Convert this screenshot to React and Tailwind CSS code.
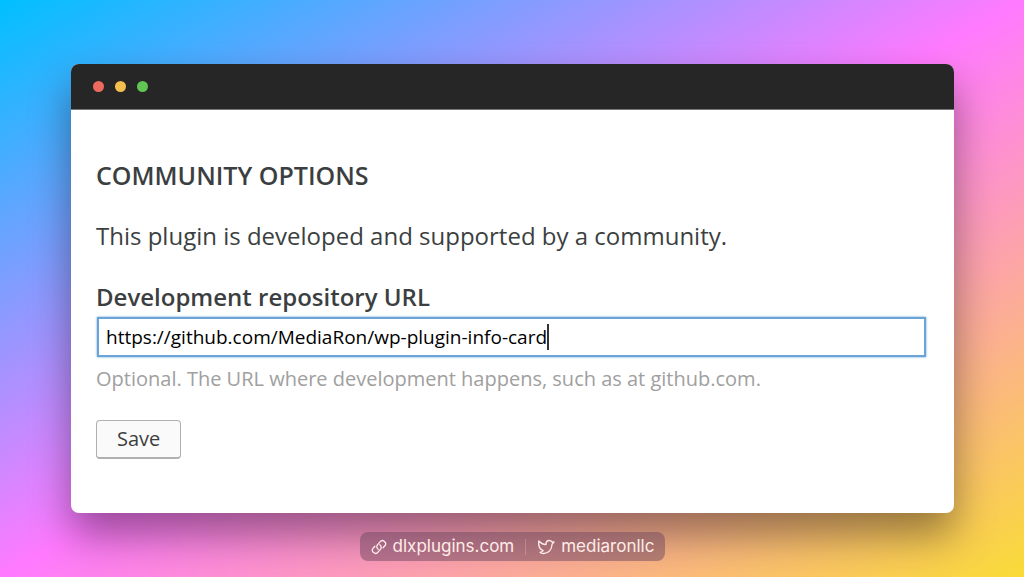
import { useState } from "react";

const DOTS = ["bg-[#ec6a5e]", "bg-[#f4bf4f]", "bg-[#61c554]"];

function LinkIcon() {
  return (
    <svg viewBox="0 0 16 16" className="size-4" fill="none" stroke="currentColor" strokeWidth="1.3" strokeLinecap="round" strokeLinejoin="round" aria-hidden="true">
      <path d="M7.200 10.200a3 3 0 0 1-.8-4.300l2.600-3a3.100 3.100 0 0 1 4.900 3.900l-1.800 2" />
      <path d="M8.800 5.800a3 3 0 0 1 .8 4.300l-2.600 3a3.100 3.100 0 0 1-4.900-3.900l1.800-2" />
    </svg>
  );
}

function BirdIcon() {
  return (
    <svg viewBox="0 0 18 16" className="h-4 w-[18px]" fill="none" stroke="currentColor" strokeWidth="1.3" strokeLinecap="round" strokeLinejoin="round" aria-hidden="true">
      <path d="M9 5.200c0-2.200 1.300-3.700 3.300-3.700 1.200 0 2.100.6 2.600 1.500h2.100l-1.900 2.200c-.3 5.300-3.600 9.300-8.500 9.300-1.900 0-3.300-.6-3.600-1.200 1.300-.1 2.500-.7 3.200-1.600C3 10.300 1.100 7 1.700 2c1.900 2.200 4.400 3.400 7.300 3.700z" />
    </svg>
  );
}

export default function App() {
  const [url, setUrl] = useState("https://github.com/MediaRon/wp-plugin-info-card");

  return (
    <div className="flex min-h-screen flex-col bg-linear-to-br/srgb from-[#00c0ff] via-[#ff7aff] to-[#f9db37] pt-16 pr-[70px] pl-[71px] font-['Open_Sans',sans-serif] text-[#3c3f41]">
      {/* WINDOW */}
      <main className="overflow-hidden rounded-lg bg-white shadow-[0_22px_40px_rgba(0,0,0,0.4)]">
        <div className="flex h-[46px] items-center gap-[11px] border-b border-[#777] bg-[#262626] px-[22px]">
          {DOTS.map((color) => (
            <span key={color} className={`size-[11px] rounded-full ${color}`} />
          ))}
        </div>

        <form className="pt-[47px] pr-7 pb-[54px] pl-[25px]" onSubmit={(e) => e.preventDefault()}>
          <h1 className="text-[25px] leading-9 font-semibold">COMMUNITY OPTIONS</h1>
          <p className="mt-[25px] text-2xl leading-9">
            This plugin is developed and supported by a community.
          </p>

          <label htmlFor="repo" className="mt-[25px] block text-2xl leading-9 font-semibold">
            Development repository URL
          </label>
          <div className="mt-0.5 ml-px flex h-10 items-center border-2 border-[#6ba5d7] px-[7px] text-black shadow-[0_0_2px_#5b9dd9]">
            <input
              id="repo"
              type="text"
              value={url}
              onChange={(e) => setUrl(e.target.value)}
              className="field-sizing-content h-[26px] max-w-full border-r-2 border-[#333] text-[19px] outline-none"
            />
          </div>
          <p className="mt-2 text-xl leading-7 text-[#a0a0a0]">
            Optional. The URL where development happens, such as at github.com.
          </p>

          <button
            type="submit"
            className="mt-[27px] h-[39px] rounded-sm border border-b-2 border-[#b0b0b0] bg-[#fafafa] px-5 text-xl leading-7"
          >
            Save
          </button>
        </form>
      </main>

      {/* CREDITS */}
      <footer className="mt-[19px] flex h-[29px] items-center self-center rounded-lg bg-[#704860]/50 px-[11px] font-['Inter',sans-serif] text-[17px] text-[#ffece8]">
        <a href="#site" className="flex items-center gap-[6px]">
          <LinkIcon />
          dlxplugins.com
        </a>
        <span className="mx-[11px] h-4 w-px bg-white/20" />
        <a href="#profile" className="flex items-center gap-[6px]">
          <BirdIcon />
          mediaronllc
        </a>
      </footer>
    </div>
  );
}
